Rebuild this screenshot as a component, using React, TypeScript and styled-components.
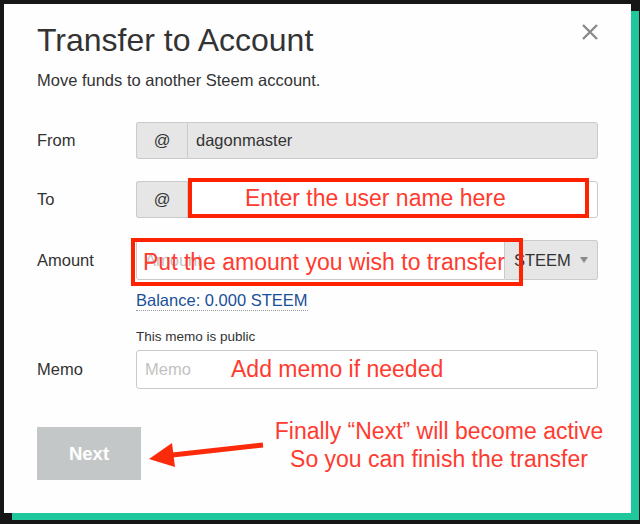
import styled, { createGlobalStyle } from 'styled-components';

const GlobalStyle = createGlobalStyle`
  html, body {
    margin: 0;
    padding: 0;
    background: #161616;
  }
  body {
    font-family: "Liberation Sans", Arial, sans-serif;
  }
  * {
    box-sizing: border-box;
  }
`;

const App = () => {
  return (
    <>
      <GlobalStyle />
      <Page>
        <Modal>
          <Header>
            <Title>Transfer to Account</Title>
            <CloseButton aria-label="Close">
              <svg width="16" height="16" viewBox="0 0 16 16">
                <path d="M1 1 L15 15 M15 1 L1 15" stroke="#8a8a8a" strokeWidth="2.4" />
              </svg>
            </CloseButton>
          </Header>
          <Subtitle>Move funds to another Steem account.</Subtitle>

          <Form>
            <Row>
              <Label $lh={37}>From</Label>
              <InputGroup $h={37}>
                <Addon>@</Addon>
                <TextInput $disabled $edge="right" readOnly value="dagonmaster" />
              </InputGroup>
            </Row>

            <Row $gap={22}>
              <Label $lh={37}>To</Label>
              <InputGroup $h={37}>
                <Addon>@</Addon>
                <TextInput $edge="right" />
                <Callout $left={52} $top={-3} $width={401} $height={40} $lh={32} $pad={53}>
                  Enter the user name here
                </Callout>
              </InputGroup>
            </Row>

            <Row $gap={22} $align="flex-start">
              <Label $lh={40}>Amount</Label>
              <FieldColumn>
                <InputGroup $h={40}>
                  <TextInput $edge="left" placeholder="Amount" />
                  <Select>
                    STEEM
                    <Caret />
                  </Select>
                  <Callout $left={-5} $top={-2} $width={392} $height={48} $lh={40} $pad={8}>
                    Put the amount you wish to transfer
                  </Callout>
                </InputGroup>
                <Balance>Balance: 0.000 STEEM</Balance>
              </FieldColumn>
            </Row>

            <Row $align="flex-end">
              <Label $lh={39}>Memo</Label>
              <FieldColumn>
                <MemoNote>This memo is public</MemoNote>
                <InputGroup $h={39}>
                  <TextInput $edge="both" placeholder="Memo" />
                  <Hint>Add memo if needed</Hint>
                </InputGroup>
              </FieldColumn>
            </Row>
          </Form>

          <Footer>
            <NextButton disabled>Next</NextButton>
            <Arrow width="120" height="30" viewBox="0 0 120 30">
              <path d="M21 14.5 L116 4" stroke="#fb2a0a" strokeWidth="5" strokeLinecap="butt" />
              <polygon points="2,18 25,2 28,26" fill="#fb2a0a" />
            </Arrow>
            <Annotation>
              Finally “Next” will become active
              <br />
              So you can finish the transfer
            </Annotation>
          </Footer>
        </Modal>
      </Page>
    </>
  );
};

const Page = styled.div`
  width: 640px;
  height: 524px;
  padding: 4px 0 0 4px;
  overflow: hidden;
`;

const Modal = styled.div`
  width: 627px;
  height: 509px;
  padding: 17px 33px 0;
  background: #fefefe;
  box-shadow: 8px 7px 0 #1fc79d;
`;

const Header = styled.div`
  display: flex;
  justify-content: space-between;
  align-items: flex-start;
`;

const Title = styled.h1`
  margin: 0;
  font-size: 32px;
  font-weight: 400;
  line-height: 38px;
  color: #333;
`;

const CloseButton = styled.button`
  margin-top: 3px;
  padding: 0;
  width: 16px;
  height: 16px;
  border: 0;
  background: none;
  display: flex;
`;

const Subtitle = styled.p`
  margin: 9px 0 0;
  font-size: 16.5px;
  line-height: 24px;
  color: #333;
`;

const Form = styled.div`
  margin-top: 30px;
  display: flex;
  flex-direction: column;
`;

const Row = styled.div<{ $gap?: number; $align?: string }>`
  display: flex;
  align-items: ${({ $align }) => $align ?? 'center'};
  margin-top: ${({ $gap }) => $gap ?? 0}px;
`;

const Label = styled.div<{ $lh: number }>`
  width: 99px;
  flex-shrink: 0;
  font-size: 16.5px;
  line-height: ${({ $lh }) => $lh}px;
  color: #333;
`;

const FieldColumn = styled.div`
  flex: 1;
  display: flex;
  flex-direction: column;
  align-items: flex-start;
`;

const InputGroup = styled.div<{ $h: number }>`
  position: relative;
  display: flex;
  width: 100%;
  height: ${({ $h }) => $h}px;
`;

const Addon = styled.div`
  width: 51px;
  flex-shrink: 0;
  display: flex;
  align-items: center;
  justify-content: center;
  background: #e6e6e6;
  border: 1px solid #cacaca;
  border-right: 0;
  border-radius: 3px 0 0 3px;
  font-size: 16.5px;
  color: #333;
`;

const radii: Record<string, string> = {
  right: '0 3px 3px 0',
  left: '3px 0 0 3px',
  both: '3px',
};

const TextInput = styled.input<{ $disabled?: boolean; $edge: string }>`
  flex: 1;
  min-width: 0;
  height: 100%;
  padding: 0 8px;
  border: 1px solid #cacaca;
  border-radius: ${({ $edge }) => radii[$edge]};
  background: ${({ $disabled }) => ($disabled ? '#e6e6e6' : '#fff')};
  font-family: inherit;
  font-size: 16.5px;
  color: #333;
  outline: none;

  &::placeholder {
    color: #c2c2c2;
  }
`;

const Select = styled.div`
  width: 93px;
  flex-shrink: 0;
  display: flex;
  align-items: center;
  padding-left: 9px;
  background: #e6e6e6;
  border: 1px solid #cacaca;
  border-left: 0;
  border-radius: 0 3px 3px 0;
  font-size: 16.5px;
  color: #333;
`;

const Caret = styled.span`
  margin-left: auto;
  margin-right: 9px;
  width: 0;
  height: 0;
  border-left: 4px solid transparent;
  border-right: 4px solid transparent;
  border-top: 6px solid #8a8a8a;
`;

const Callout = styled.div<{
  $left: number;
  $top: number;
  $width: number;
  $height: number;
  $lh: number;
  $pad: number;
}>`
  position: absolute;
  left: ${({ $left }) => $left}px;
  top: ${({ $top }) => $top}px;
  width: ${({ $width }) => $width}px;
  height: ${({ $height }) => $height}px;
  padding-left: ${({ $pad }) => $pad}px;
  border: 4px solid #ff2200;
  font-size: 23px;
  line-height: ${({ $lh }) => $lh}px;
  color: #ff3b30;
  white-space: nowrap;
  pointer-events: none;
`;

const Hint = styled.div`
  position: absolute;
  left: 95px;
  top: 0;
  height: 100%;
  display: flex;
  align-items: center;
  font-size: 23px;
  color: #ff3b30;
  white-space: nowrap;
  pointer-events: none;
`;

const Balance = styled.span`
  display: inline-block;
  margin-top: 10px;
  font-size: 16.5px;
  line-height: 20px;
  color: #1a5099;
  border-bottom: 1px dotted #9a9a9a;
`;

const MemoNote = styled.div`
  margin: 18px 0 5px;
  font-size: 13.5px;
  line-height: 16px;
  color: #333;
`;

const Footer = styled.div`
  margin-top: 38px;
  display: flex;
  align-items: flex-start;
`;

const NextButton = styled.button`
  width: 104px;
  height: 53px;
  flex-shrink: 0;
  padding: 0;
  border: 0;
  border-radius: 0;
  background: #c4c7c7;
  color: #fff;
  font-family: inherit;
  font-size: 18.5px;
  font-weight: 700;
`;

const Arrow = styled.svg`
  flex-shrink: 0;
  margin: 14px 0 0 6px;
`;

const Annotation = styled.div`
  flex-shrink: 0;
  width: 344px;
  margin-top: -10px;
  font-size: 23px;
  line-height: 28px;
  text-align: center;
  color: #ff3b30;
`;

export default App;
